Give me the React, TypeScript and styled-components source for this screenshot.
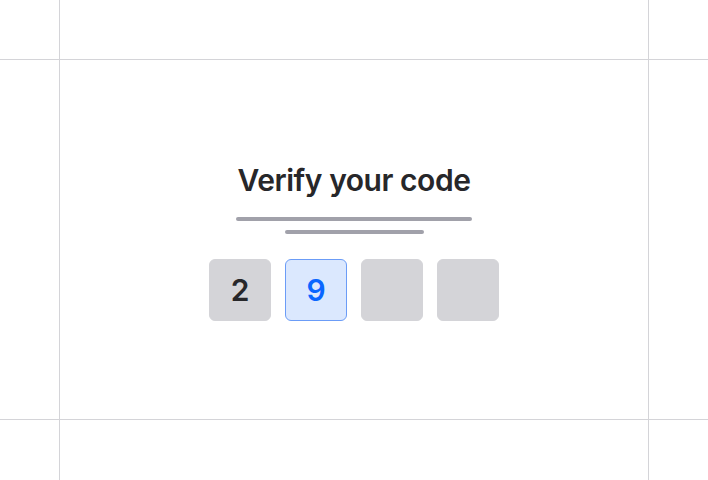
import React from "react";
import styled, { createGlobalStyle } from "styled-components";

const Global = createGlobalStyle`
  html, body { margin: 0; padding: 0; background: #ffffff; }
  body { font-family: Inter, "Noto Sans", sans-serif; }
`;

const Page = styled.div`
  width: 708px;
  height: 480px;
  display: grid;
  grid-template-columns: 59px 1px 588px 1px 59px;
  grid-template-rows: 59px 1px 359px 1px 60px;
  background: #ffffff;
`;

const HLine = styled.div<{ $row: number }>`
  grid-column: 1 / -1;
  grid-row: ${(p) => p.$row};
  background: #d4d4d8;
`;

const VLine = styled.div<{ $col: number }>`
  grid-row: 1 / -1;
  grid-column: ${(p) => p.$col};
  background: #d4d4d8;
`;

const Stage = styled.main`
  grid-column: 3;
  grid-row: 3;
  display: flex;
  flex-direction: column;
  align-items: center;
  justify-content: center;
  padding-top: 2px;
`;

const Title = styled.h1`
  margin: 2px 0 0;
  font-family: Inter, "Noto Sans", sans-serif;
  font-size: 30px;
  line-height: 36px;
  font-weight: 600;
  letter-spacing: -0.45px;
  color: #27272a;
`;

const Bar = styled.div<{ $w: number; $mt: number }>`
  width: ${(p) => p.$w}px;
  height: 4px;
  margin-top: ${(p) => p.$mt}px;
  border-radius: 2px;
  background: #a1a1aa;
`;

const Boxes = styled.div`
  display: flex;
  gap: 14px;
  margin-top: 25px;
`;

const Box = styled.div<{ $active?: boolean }>`
  box-sizing: border-box;
  width: 62px;
  height: 62px;
  border-radius: 6px;
  display: flex;
  align-items: center;
  justify-content: center;
  font-family: Inter, "Noto Sans", sans-serif;
  font-size: 30px;
  font-weight: 600;
  color: ${(p) => (p.$active ? "#0a66ff" : "#27272a")};
  background: ${(p) => (p.$active ? "#dbe8fe" : "#d4d4d8")};
  border: 1px solid ${(p) => (p.$active ? "#6b9cf7" : "#d4d4d8")};
`;

const digits = ["2", "9", "", ""];

export default function App() {
  return (
    <>
      <Global />
      <Page>
        <HLine $row={2} />
        <HLine $row={4} />
        <VLine $col={2} />
        <VLine $col={4} />
        <Stage>
          <Title>Verify your code</Title>
          <Bar $w={236} $mt={19} />
          <Bar $w={139} $mt={9} />
          <Boxes>
            {digits.map((d, i) => (
              <Box key={i} $active={i === 1}>
                {d}
              </Box>
            ))}
          </Boxes>
        </Stage>
      </Page>
    </>
  );
}
